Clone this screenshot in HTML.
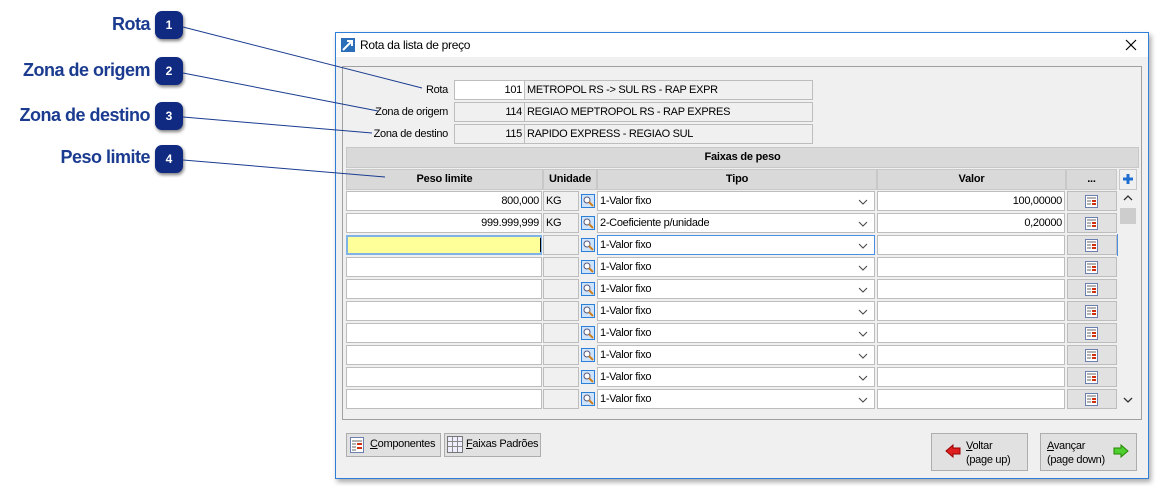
<!DOCTYPE html>
<html><head><meta charset="utf-8">
<style>
*{box-sizing:border-box;margin:0;padding:0}
body{width:1156px;height:486px;background:#fff;position:relative;overflow:hidden;font-family:"Liberation Sans",sans-serif;font-size:11px;color:#000}
.a{position:absolute}
.call{position:absolute;font-weight:bold;font-size:18px;color:#1a3b8f;text-align:right;letter-spacing:-0.5px}
.badge{position:absolute;width:28px;height:28px;border-radius:7px;background:#0f2a80;color:#fff;font-size:12px;font-weight:bold;text-align:center;line-height:28px;box-shadow:1px 2px 3px rgba(0,0,0,.5)}
.t{letter-spacing:-0.3px;white-space:nowrap}
.box{position:absolute;border:1px solid #bdbdbd;height:20px;line-height:18px;padding:0 2px;letter-spacing:-0.3px;white-space:nowrap}
.hdr{position:absolute;background:#d9d9d9;border:1px solid #c8c8c8;font-weight:bold;text-align:center;line-height:19px;letter-spacing:-0.2px}
.btn{position:absolute;background:#e1e1e1;border:1px solid #adadad}
</style></head><body>

<div class="call" style="left:40px;top:14px;width:110px">Rota</div>
<div class="call" style="left:0;top:60px;width:150px">Zona de origem</div>
<div class="call" style="left:0;top:105px;width:150px">Zona de destino</div>
<div class="call" style="left:10px;top:147px;width:140px">Peso limite</div>
<div class="badge" style="left:155px;top:11px">1</div>
<div class="badge" style="left:155px;top:57px">2</div>
<div class="badge" style="left:155px;top:102px">3</div>
<div class="badge" style="left:155px;top:145px">4</div>

<div class="a" style="left:335px;top:32px;width:814px;height:447px;border:1px solid #2f7ed8;background:#f0f0f0;box-shadow:2px 3px 5px rgba(0,0,0,.35)"></div>
<div class="a" style="left:336px;top:33px;width:812px;height:24px;background:#fff"></div>
<svg class="a" style="left:341px;top:38px" width="14" height="14"><rect width="14" height="14" fill="#2a6fb8"/><path d="M2 12 L11 3 M6 3 H11 V8" stroke="#fff" stroke-width="2" fill="none"/></svg>
<div class="a t" style="left:360px;top:38px;font-size:12px">Rota da lista de preço</div>
<svg class="a" style="left:1125px;top:39px" width="12" height="12"><path d="M1 1L11 11M11 1L1 11" stroke="#000" stroke-width="1.2"/></svg>

<div class="a" style="left:342px;top:66px;width:800px;height:354px;border:1px solid #a0a0a0"></div>

<div class="a t" style="left:340px;top:84px;width:108px;text-align:right">Rota</div>
<div class="a t" style="left:340px;top:106px;width:108px;text-align:right">Zona de origem</div>
<div class="a t" style="left:340px;top:128px;width:108px;text-align:right">Zona de destino</div>
<div class="box" style="left:454px;top:80px;width:71px;background:#fff;text-align:right">101</div>
<div class="box" style="left:524px;top:80px;width:289px">METROPOL RS -&gt; SUL RS - RAP EXPR</div>
<div class="box" style="left:454px;top:102px;width:71px;text-align:right">114</div>
<div class="box" style="left:524px;top:102px;width:289px">REGIAO MEPTROPOL RS - RAP EXPRES</div>
<div class="box" style="left:454px;top:124px;width:71px;text-align:right">115</div>
<div class="box" style="left:524px;top:124px;width:289px">RAPIDO EXPRESS - REGIAO SUL</div>

<div class="hdr" style="left:346px;top:147px;width:793px;height:21px">Faixas de peso</div>
<div class="hdr" style="left:346px;top:169px;width:197px;height:21px">Peso limite</div>
<div class="hdr" style="left:543px;top:169px;width:54px;height:21px">Unidade</div>
<div class="hdr" style="left:597px;top:169px;width:280px;height:21px">Tipo</div>
<div class="hdr" style="left:877px;top:169px;width:189px;height:21px">Valor</div>
<div class="hdr" style="left:1066px;top:169px;width:51px;height:21px">...</div>
<div class="a" style="left:1119px;top:169px;width:18px;height:21px;border:1px solid #c8c8c8;background:#f0f0f0"></div>
<svg class="a" style="left:1122px;top:173px" width="12" height="12"><path d="M6 1V11M1 6H11" stroke="#1f6fd1" stroke-width="3"/></svg>
<svg class="a" style="left:1123px;top:194px" width="10" height="8"><path d="M1 6L5 2L9 6" stroke="#333" stroke-width="1.3" fill="none"/></svg>
<div class="a" style="left:1120px;top:208px;width:16px;height:16px;background:#cdcdcd"></div>
<svg class="a" style="left:1123px;top:396px" width="10" height="8"><path d="M1 2L5 6L9 2" stroke="#333" stroke-width="1.3" fill="none"/></svg>

<div id="rows"></div>

<div class="btn" style="left:346px;top:433px;width:95px;height:24px"></div>
<svg class="a" style="left:350px;top:437px" width="14" height="16"><rect x=".5" y=".5" width="13" height="15" fill="#fff" stroke="#6b7fb0"/><path d="M2 4H12M2 7H6M2 10H6M2 13H6" stroke="#666"/><rect x="7" y="6" width="5" height="2" fill="#d03010"/><rect x="7" y="10" width="5" height="2" fill="#d03010"/></svg>
<div class="a t" style="left:370px;top:438px"><u>C</u>omponentes</div>
<div class="btn" style="left:444px;top:433px;width:97px;height:24px"></div>
<svg class="a" style="left:447px;top:436px" width="16" height="17"><rect x=".5" y=".5" width="15" height="16" fill="#eef" stroke="#777"/><path d="M5.5 1V16M10.5 1V16M1 5.5H15M1 10.5H15" stroke="#888"/></svg>
<div class="a t" style="left:466px;top:438px"><u>F</u>aixas Padrões</div>

<div class="btn" style="left:931px;top:433px;width:97px;height:38px"></div>
<svg class="a" style="left:945px;top:444px" width="16" height="14"><path d="M1 7L8 1V4H15V10H8V13Z" fill="#e02020" stroke="#900"/></svg>
<div class="a t" style="left:966px;top:439px;line-height:14px"><u>V</u>oltar<br>(page up)</div>
<div class="btn" style="left:1040px;top:433px;width:97px;height:38px"></div>
<div class="a t" style="left:1047px;top:439px;line-height:14px"><u>A</u>vançar<br>(page down)</div>
<svg class="a" style="left:1113px;top:444px" width="16" height="14"><path d="M15 7L8 1V4H1V10H8V13Z" fill="#4fd030" stroke="#280"/></svg>

<script>
var h='';
var data=[["800,000","KG","1-Valor fixo","100,00000"],["999.999,999","KG","2-Coeficiente p/unidade","0,20000"]];
for(var i=0;i<10;i++){
 var y=191+i*22, d=data[i]||["","","1-Valor fixo",""];
 var sel=(i==2);
 h+='<div class="box" style="left:346px;top:'+y+'px;width:196px;text-align:right;background:'+(sel?'#ffff99':'#fff')+';'+(sel?'border:2px solid #7fb3e8;':'')+'">'+d[0]+'</div>';
 if(sel)h+='<div class="a" style="left:540px;top:'+(y+3)+'px;width:1px;height:14px;background:#000"></div>';
 h+='<div class="box" style="left:543px;top:'+y+'px;width:36px">'+d[1]+'</div>';
 h+='<svg class="a" style="left:581px;top:'+(y+3)+'px" width="14" height="14"><rect x=".5" y=".5" width="13" height="13" fill="#cfe4fb" stroke="#2a7fd8"/><circle cx="6" cy="6" r="3" fill="#fff" stroke="#557"/><path d="M8 8L12 12" stroke="#d08020" stroke-width="2"/></svg>';
 h+='<div class="box" style="left:597px;top:'+y+'px;width:278px;background:#fff;'+(sel?'border-color:#4a90e2;':'')+'">'+d[2]+'</div>';
 h+='<svg class="a" style="left:858px;top:'+(y+8)+'px" width="10" height="6"><path d="M1 1L5 5L9 1" stroke="#444" fill="none"/></svg>';
 h+='<div class="box" style="left:877px;top:'+y+'px;width:188px;background:#fff;text-align:right">'+d[3]+'</div>';
 h+='<div class="box" style="left:1067px;top:'+y+'px;width:50px;background:#e1e1e1"></div>';
 h+='<svg class="a" style="left:1085px;top:'+(y+4)+'px" width="13" height="13"><rect x=".5" y=".5" width="12" height="12" fill="#fff" stroke="#6b7fb0"/><path d="M2 3H11M2 6H6M2 9H6" stroke="#666"/><rect x="7" y="5" width="4" height="2" fill="#d03010"/><rect x="7" y="8" width="4" height="2" fill="#d03010"/></svg>';
}
h+='<div class="a" style="left:1117px;top:234px;width:1px;height:22px;background:#4a90e2"></div>';
document.getElementById('rows').innerHTML=h;
</script>
<svg class="a" style="left:0;top:0;pointer-events:none" width="1156" height="486">
<g stroke="#1a3b8f" stroke-width="1" fill="none">
<path d="M183 27L422 88"/>
<path d="M183 73L378 111"/>
<path d="M183 117L372 133"/>
<path d="M183 160L385 177"/>
</g></svg>
</body></html>
